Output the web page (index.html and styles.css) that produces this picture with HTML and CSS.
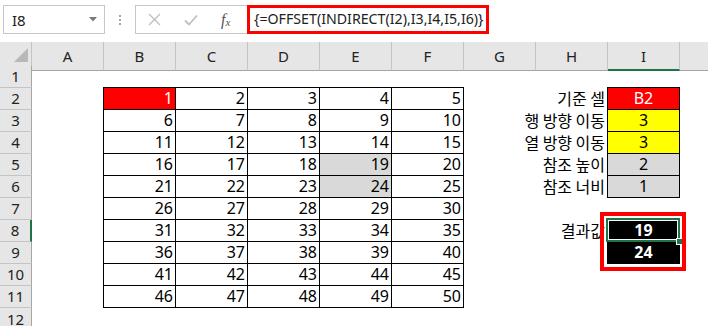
FILE: index.html
```html
<!DOCTYPE html>
<html lang="ko">
  <head>
    <meta charset="UTF-8" />
    <title>OFFSET + INDIRECT</title>
    <link rel="stylesheet" href="styles.css">
  </head>

  <body>
    <div class="toolbar">
      <div class="namebox">
        <span>I8</span>
        <svg width="8" height="5" viewBox="0 0 8 5"><path d="M0 0h8L4 4.5z" fill="#7a7a7a"/></svg>
      </div>
      <div class="grip"><i></i><i></i><i></i></div>
      <div class="fxbox">
        <svg class="ic cancel" width="13" height="13" viewBox="0 0 13 13">
          <path d="M1 1l11 11M12 1L1 12" stroke="#bfbfbf" stroke-width="1.4" fill="none"/>
        </svg>
        <svg class="ic check" width="14" height="12" viewBox="0 0 14 12">
          <path d="M1 6.5l4 4L13 1.5" stroke="#bfbfbf" stroke-width="1.8" fill="none"/>
        </svg>
        <span class="fx">f<sub>x</sub></span>
      </div>
      <div class="formula">{=OFFSET(INDIRECT(I2),I3,I4,I5,I6)}</div>
    </div>

    <div class="sheet">
      <div class="row head">
        <div class="corner">
          <svg width="32" height="23" viewBox="0 0 32 23"><path d="M28 6v14H14z" fill="#b8b8b8"/></svg>
        </div>
        <div class="ch">A</div><div class="ch">B</div><div class="ch">C</div>
        <div class="ch">D</div><div class="ch">E</div><div class="ch">F</div>
        <div class="ch">G</div><div class="ch">H</div><div class="ch sel">I</div>
        <div class="ch"></div>
      </div>

      <div class="row"><div class="rh">1</div></div>

      <div class="row">
        <div class="rh">2</div><div></div>
        <div class="t red">1</div><div class="t">2</div><div class="t">3</div><div class="t">4</div><div class="t">5</div>
        <div></div><div class="label">기준 셀</div><div class="t mid red">B2</div>
      </div>

      <div class="row">
        <div class="rh">3</div><div></div>
        <div class="t">6</div><div class="t">7</div><div class="t">8</div><div class="t">9</div><div class="t">10</div>
        <div></div><div class="label">행 방향 이동</div><div class="t mid yellow">3</div>
      </div>

      <div class="row">
        <div class="rh">4</div><div></div>
        <div class="t">11</div><div class="t">12</div><div class="t">13</div><div class="t">14</div><div class="t">15</div>
        <div></div><div class="label">열 방향 이동</div><div class="t mid yellow">3</div>
      </div>

      <div class="row">
        <div class="rh">5</div><div></div>
        <div class="t">16</div><div class="t">17</div><div class="t">18</div><div class="t grey">19</div><div class="t">20</div>
        <div></div><div class="label">참조 높이</div><div class="t mid grey">2</div>
      </div>

      <div class="row">
        <div class="rh">6</div><div></div>
        <div class="t">21</div><div class="t">22</div><div class="t">23</div><div class="t grey">24</div><div class="t">25</div>
        <div></div><div class="label">참조 너비</div><div class="t mid grey">1</div>
      </div>

      <div class="row">
        <div class="rh">7</div><div></div>
        <div class="t">26</div><div class="t">27</div><div class="t">28</div><div class="t">29</div><div class="t">30</div>
      </div>

      <div class="row">
        <div class="rh active">8</div><div></div>
        <div class="t">31</div><div class="t">32</div><div class="t">33</div><div class="t">34</div><div class="t">35</div>
        <div></div><div class="label">결과값</div>
        <div class="t mid result current">19<span class="handle"></span></div>
      </div>

      <div class="row">
        <div class="rh">9</div><div></div>
        <div class="t">36</div><div class="t">37</div><div class="t">38</div><div class="t">39</div><div class="t">40</div>
        <div></div><div></div><div class="t mid result">24</div>
      </div>

      <div class="row">
        <div class="rh">10</div><div></div>
        <div class="t">41</div><div class="t">42</div><div class="t">43</div><div class="t">44</div><div class="t">45</div>
      </div>

      <div class="row">
        <div class="rh">11</div><div></div>
        <div class="t">46</div><div class="t">47</div><div class="t">48</div><div class="t">49</div><div class="t">50</div>
      </div>

      <div class="row last"><div class="rh">12</div></div>
    </div>
  </body>
</html>
```

FILE: styles.css
```css
* {
  margin: 0;
  padding: 0;
  box-sizing: border-box;
}

body {
  width: 708px;
  height: 326px;
  overflow: hidden;
  background: #fff;
  color: #000;
  font-family: "Noto Sans", "Noto Sans CJK KR", sans-serif;
}

/* formula bar */
.toolbar {
  display: flex;
  height: 42px;
  padding: 5px 0 0 3px;
}

.namebox {
  width: 102px;
  height: 29px;
  display: flex;
  align-items: center;
  justify-content: space-between;
  padding: 0 7px 0 8px;
  border: 1px solid #c6c6c6;
  font-size: 15px;
  color: #222;
}

.grip {
  width: 30px;
  height: 29px;
  display: flex;
  flex-direction: column;
  align-items: center;
  justify-content: center;
  gap: 2px;
}

.grip i {
  width: 2px;
  height: 2px;
  background: #a6a6a6;
}

.fxbox {
  width: 112px;
  height: 29px;
  display: flex;
  align-items: center;
  border: 1px solid #c6c6c6;
  border-right: none;
}

.fxbox .cancel {
  margin-left: 12px;
}

.fxbox .check {
  margin-left: 23px;
}

.fx {
  margin-left: 23px;
  font-family: "Liberation Serif", serif;
  font-style: italic;
  font-size: 16px;
  color: #555;
}

.fx sub {
  font-size: 11px;
  vertical-align: -1px;
}

.formula {
  width: 242px;
  height: 29px;
  border: 3px solid #f00;
  padding-left: 4px;
  font-size: 14.2px;
  line-height: 22px;
  color: #222;
  white-space: nowrap;
}

/* grid */
.row {
  display: grid;
  grid-template-columns: 32px repeat(10, 72px);
  height: 22px;
}

.head {
  height: 24px;
}

.corner,
.ch {
  background: #e6e6e6;
  border-right: 1px solid #c4c4c4;
  border-bottom: 1px solid #a6a6a6;
}

.ch {
  display: flex;
  align-items: center;
  justify-content: center;
  font-size: 15px;
  color: #222;
}

.ch.sel {
  border-bottom: 2px solid #217346;
}

.rh {
  background: #e6e6e6;
  border-right: 1px solid #a6a6a6;
  border-bottom: 1px solid #c4c4c4;
  text-align: center;
  font-size: 15px;
  line-height: 21px;
  color: #222;
}

.last .rh {
  line-height: 22px;
}

.rh.active {
  border-right: 2px solid #217346;
}

.t {
  border-right: 1px solid #000;
  border-bottom: 1px solid #000;
  box-shadow: -1px 0 0 #000, 0 -1px 0 #000, -1px -1px 0 #000;
  text-align: right;
  padding-right: 2px;
  font-size: 16px;
  line-height: 21px;
}

.mid {
  text-align: center;
  padding-right: 0;
}

.red {
  background: #f00;
  color: #fff;
}

.yellow {
  background: #ff0;
}

.grey {
  background: #d9d9d9;
}

.result {
  background: #000;
  color: #fff;
  font-weight: bold;
}

/* long labels spill into the column on the left, as in the sheet */
.label {
  display: flex;
  justify-content: flex-end;
  padding-right: 3px;
  font-family: "Noto Sans CJK KR", sans-serif;
  font-size: 16px;
  word-spacing: -1px;
  line-height: 21px;
  white-space: nowrap;
}

/* active cell + annotation box */
.current {
  position: relative;
}

.current::before {
  content: "";
  position: absolute;
  inset: -2px -1px -1px -2px;
  border: 2px solid #217346;
  box-shadow: inset 0 0 0 1px #fff;
}

.current::after {
  content: "";
  position: absolute;
  inset: -8px -7px -30px -8px;
  border: 4px solid #f00;
  z-index: 2;
}

.handle {
  position: absolute;
  right: -4px;
  bottom: -4px;
  width: 7px;
  height: 7px;
  background: #217346;
  border: 1px solid #fff;
  z-index: 1;
}
```
